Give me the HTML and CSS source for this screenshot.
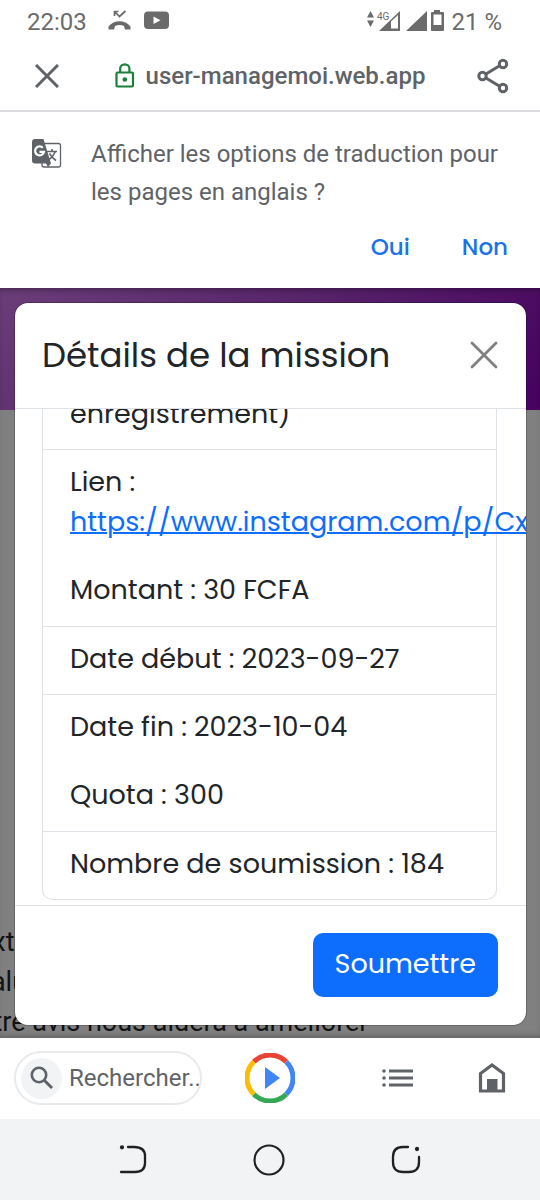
FILE: index.html
```html
<!DOCTYPE html>
<html lang="fr">
<head>
<meta charset="utf-8">
<meta name="viewport" content="width=device-width, initial-scale=1">
<title>Détails de la mission</title>
<link rel="stylesheet" href="styles.css">
</head>
<body>
<div class="status">
  <span class="status-time">22:03</span>
  <svg class="status-left-icons" width="62" height="24" viewBox="0 0 62 24" aria-hidden="true">
    <path d="M0.500 16.500C6 9.500 17 9.500 22.500 16.500V19.500H17L16 16Q11.500 14.200 7 16L6 19.500H0.500Z" fill="#6b6b6b"/>
    <path d="M6.500 6V1.500H10.500M6.500 1.500L11.500 6.500 17.500 1" fill="none" stroke="#6b6b6b" stroke-width="1.700"/>
    <rect x="36" y="1.500" width="25" height="17.500" rx="4" fill="#6b6b6b"/>
    <path d="M45.500 6.500v7.500l7-3.750z" fill="#fff"/>
  </svg>
  <svg class="status-right-icons" width="78" height="24" viewBox="0 0 78 24" aria-hidden="true">
    <g fill="#6b6b6b">
      <path d="M0 7.500L3.500 1 7 7.500zM0 10.500h7L3.500 17z"/>
      <path d="M12 21L33 1V21z"/>
      <path d="M39 21L60 1V21z"/>
      <path d="M64 2h3V0h6v2h3a1 1 0 0 1 1 1v17a1 1 0 0 1-1 1H65a1 1 0 0 1-1-1V3a1 1 0 0 1 1-1z"/>
    </g>
    <path d="M24 18.500V11.500L31 5V18.500z" fill="#fff"/>
    <path d="M66.500 4.500h8V15h-8z" fill="#fff"/>
    <text x="10" y="9.500" class="network-label">4G</text>
  </svg>
  <span class="status-battery">21 %</span>
</div>

<header class="address-bar">
  <button class="icon-button" type="button" aria-label="Fermer l’onglet">
    <svg width="24" height="24" viewBox="0 0 24 24"><path d="M1 1L23 23M23 1L1 23" stroke="#5f6368" stroke-width="3"/></svg>
  </button>
  <div class="address">
    <svg width="20" height="26" viewBox="0 0 20 26" aria-hidden="true">
      <rect x="1.500" y="9.500" width="16.500" height="14" rx="1" fill="none" stroke="#188038" stroke-width="2.200"/>
      <path d="M5.200 9V5.500a4.600 4.200 0 0 1 9.200 0V9" fill="none" stroke="#188038" stroke-width="2.200"/>
      <circle cx="9.800" cy="16.500" r="2.300" fill="#188038"/>
    </svg>
    <span>user-managemoi.web.app</span>
  </div>
  <button class="icon-button" type="button" aria-label="Partager">
    <svg width="32" height="36" viewBox="0 0 32 36" fill="none" stroke="#5f6368" stroke-width="3">
      <path d="M9 16L23 7.500M9 20L23 28.500"/>
      <circle cx="5.500" cy="18" r="3.700"/><circle cx="26" cy="6" r="3.700"/><circle cx="26" cy="30" r="3.700"/>
    </svg>
  </button>
</header>

<section class="translate">
  <div class="translate-row">
    <svg class="translate-icon" width="30" height="30" viewBox="0 0 30 30" aria-hidden="true">
      <rect x="10" y="4.500" width="18.500" height="23.500" rx="2" fill="#fff" stroke="#5f6368" stroke-width="1.300"/>
      <path d="M3 0H11.500L19 24.500 16 28 14 24.500H3a3 3 0 0 1-3-3V3a3 3 0 0 1 3-3z" fill="#5f6368"/>
      <path d="M10.800 8.700A4.500 4.500 0 1 0 12 12.800H7.500" fill="none" stroke="#fff" stroke-width="2.200"/>
      <path d="M15 12.500H25M20 10V12.500M23.500 12.500Q21 18 16.500 21M17.500 14.500Q20 19 24 21.500" fill="none" stroke="#5f6368" stroke-width="1.600"/>
    </svg>
    <p class="translate-text">Afficher les options de traduction pour les pages en anglais ?</p>
  </div>
  <div class="translate-actions">
    <button class="text-button" type="button">Oui</button>
    <button class="text-button" type="button">Non</button>
  </div>
</section>

<main class="viewport">
  <div class="backdrop" aria-hidden="true">
    <div class="hero"></div>
    <div class="page-text"><div>exte</div><div>valu</div><div>otre avis nous aidera à améliorer</div></div>
  </div>
  <div class="modal" role="dialog" aria-labelledby="modal-title">
    <div class="modal-header">
      <h1 class="modal-title" id="modal-title">Détails de la mission</h1>
      <button class="icon-button" type="button" aria-label="Fermer">
        <svg width="28" height="28" viewBox="0 0 28 28"><path d="M2 2L26 26M26 2L2 26" stroke="#808080" stroke-width="2.800" stroke-linecap="round"/></svg>
      </button>
    </div>
    <div class="modal-body">
      <ul class="details">
        <li class="detail">enregistrement)</li>
        <li class="detail joined">Lien :<br><a class="link" href="#">https://www.instagram.com/p/Cx</a></li>
        <li class="detail">Montant : 30 FCFA</li>
        <li class="detail">Date début : 2023-09-27</li>
        <li class="detail joined">Date fin : 2023-10-04</li>
        <li class="detail">Quota : 300</li>
        <li class="detail">Nombre de soumission : 184</li>
      </ul>
    </div>
    <div class="modal-footer">
      <button class="submit" type="button">Soumettre</button>
    </div>
  </div>
</main>

<footer class="toolbar">
  <button class="search" type="button">
    <span class="search-icon">
      <svg width="24" height="24" viewBox="0 0 24 24" aria-hidden="true"><circle cx="9" cy="9" r="7.200" fill="none" stroke="#5f6368" stroke-width="2.600"/><path d="M14 14L22 22" stroke="#5f6368" stroke-width="3"/></svg>
    </span>
    <span class="search-label">Rechercher..</span>
  </button>
  <button class="icon-button play-button" type="button" aria-label="Lecture">
    <svg width="50" height="50" viewBox="0 0 50 50" fill="none" stroke-width="5">
      <path d="M8.800 8.800A22.700 22.700 0 0 1 41.200 8.800" stroke="#ea4335"/>
      <path d="M41.200 8.800A22.700 22.700 0 0 1 41.200 41.200" stroke="#4285f4"/>
      <path d="M41.200 41.200A22.700 22.700 0 0 1 8.800 41.200" stroke="#34a853"/>
      <path d="M8.800 41.200A22.700 22.700 0 0 1 8.800 8.800" stroke="#fbbc04"/>
      <path d="M20 14V36L35 25z" fill="#4285f4"/>
    </svg>
  </button>
  <button class="icon-button list-button" type="button" aria-label="Liste">
    <svg width="32" height="18" viewBox="0 0 32 18" fill="#5f6368">
      <path d="M7 .5H31v3H7zM7 7.500H31v3H7zM7 14.500H31v3H7z"/>
      <circle cx="2" cy="2" r="1.800"/><circle cx="2" cy="9" r="1.800"/><circle cx="2" cy="16" r="1.800"/>
    </svg>
  </button>
  <button class="icon-button" type="button" aria-label="Accueil">
    <svg width="28" height="32" viewBox="0 0 28 32">
      <path d="M2.500 29V11.500L14 3 25.500 11.500V29z" fill="none" stroke="#5f6368" stroke-width="3.200"/>
      <path d="M9 17H19.500V30H9z" fill="#5f6368"/>
    </svg>
  </button>
</footer>

<nav class="system-nav" aria-label="Navigation système">
  <button class="icon-button" type="button" aria-label="Retour">
    <svg width="28" height="30" viewBox="0 0 28 30" fill="none" stroke="#202124" stroke-width="2.300" stroke-linecap="round"><path d="M9 2H15Q26 2 26 11V18Q26 27 16 27H2"/><circle cx="3" cy="2.300" r="1" fill="#202124"/></svg>
  </button>
  <button class="icon-button" type="button" aria-label="Écran d’accueil">
    <svg width="32" height="32" viewBox="0 0 32 32" fill="none" stroke="#202124" stroke-width="2.200"><circle cx="16" cy="16" r="14.500"/></svg>
  </button>
  <button class="icon-button" type="button" aria-label="Applications récentes">
    <svg width="30" height="30" viewBox="0 0 30 30" fill="none" stroke="#202124" stroke-width="2.300" stroke-linecap="round"><path d="M17 2H12Q2 2 2 12V17Q2 27 12 27H18Q28 27 28 17V12"/><circle cx="26" cy="4" r="1" fill="#202124"/></svg>
  </button>
</nav>
</body>
</html>
```

FILE: styles.css
```css
* { box-sizing: border-box; }

body {
  margin: 0;
  min-height: 100vh;
  display: flex;
  flex-direction: column;
  background: #fff;
  color: #5f6368;
  font-family: Roboto, "Liberation Sans", sans-serif;
  overflow-x: hidden;
}

button {
  border: 0;
  padding: 0;
  background: none;
  font: inherit;
  color: inherit;
  cursor: pointer;
}

svg { display: block; flex: none; }

.icon-button { display: flex; flex: none; }

/* Device status bar */
.status {
  display: flex;
  align-items: center;
  height: 44px;
  padding: 0 38px 0 27px;
  color: #6b6b6b;
  font-size: 24px;
}
.status-left-icons { margin-left: 21px; }
.status-right-icons { margin-left: auto; margin-right: 6px; }
.network-label { font-size: 10px; fill: #6b6b6b; }

/* Browser address bar */
.address-bar {
  display: flex;
  align-items: center;
  justify-content: space-between;
  height: 68px;
  padding: 0 31px 2px 35px;
  border-bottom: 2px solid #dadce0;
}
.address {
  display: flex;
  align-items: center;
  gap: 11px;
  padding-left: 4px;
  font-size: 24px;
  font-weight: 500;
}

/* Translation prompt */
.translate { padding: 23px 32px 17px; }
.translate-row { display: flex; gap: 29px; }
.translate-icon { margin-top: 4px; }
.translate-text { margin: 0; font-size: 24px; line-height: 38px; }
.translate-actions {
  display: flex;
  justify-content: flex-end;
  gap: 52px;
  padding-top: 12px;
}
.text-button {
  color: #1a73e8;
  font-family: Poppins, Roboto, sans-serif;
  font-size: 23px;
  font-weight: 500;
  line-height: 48px;
}

/* Web page behind the dialog */
.viewport {
  position: relative;
  flex: 1;
  display: flex;
  flex-direction: column;
  padding: 15px 14px 13px 15px;
  overflow: hidden;
}
.backdrop {
  position: absolute;
  inset: 0;
  display: flex;
  flex-direction: column;
  justify-content: space-between;
  background: #808080;
  box-shadow: inset 0 -4px 6px -3px rgba(0, 0, 0, .3);
}
.hero {
  height: 122px;
  background: linear-gradient(135deg, #6a3d78, #562269 50%, #470060);
  box-shadow: inset 0 4px 6px -3px rgba(0, 0, 0, .4);
}
.page-text {
  margin-bottom: -4px;
  color: #111214;
  font-size: 27px;
  line-height: 40px;
  text-indent: -22px;
  white-space: nowrap;
}

/* Mission dialog */
.modal {
  position: relative;
  flex: 1;
  display: flex;
  flex-direction: column;
  border-radius: 13px;
  background: #fff;
  color: #212529;
  font-family: Poppins, Inter, "Open Sans", sans-serif;
  font-size: 27px;
  line-height: 40px;
  overflow: hidden;
  box-shadow: 0 0 0 1px rgba(0, 0, 0, .2);
}
.modal-header {
  display: flex;
  align-items: center;
  justify-content: space-between;
  height: 106px;
  padding: 0 28px 2px 27px;
  border-bottom: 1px solid #dee2e6;
}
.modal-title { margin: 0; font-size: 34px; font-weight: 400; line-height: 52px; }
.modal-body {
  flex: 1 1 0;
  min-height: 0;
  display: flex;
  flex-direction: column;
  justify-content: flex-end;
  padding: 0 29px 5px 27px;
  overflow: hidden;
}
.details {
  flex: none;
  margin: 0;
  padding: 0;
  border: 1px solid #dee2e6;
  border-bottom: 0;
  border-radius: 10px;
  list-style: none;
}
.detail {
  padding: 12px 28px 15px 27px;
  border-bottom: 1px solid #dee2e6;
  white-space: nowrap;
}
.detail:last-child { border-radius: 0 0 10px 10px; }
.joined { border-bottom-color: transparent; }
.joined + .detail { padding-bottom: 16px; }
.link { color: #0d6efd; text-decoration-thickness: 2px; }
.modal-footer {
  display: flex;
  justify-content: flex-end;
  padding: 27px 28px 28px;
  border-top: 1px solid #dee2e6;
}
.submit {
  height: 64px;
  padding: 0 22px 2px;
  border-radius: 10px;
  background: #0d6efd;
  color: #fff;
}

/* Browser bottom toolbar */
.toolbar {
  display: flex;
  align-items: center;
  height: 81px;
  padding: 0 34px 1px 14px;
}
.search {
  display: flex;
  align-items: center;
  gap: 7px;
  width: 188px;
  height: 54px;
  padding: 0 0 0 5px;
  border: 2px solid #e8eaed;
  border-radius: 27px;
  font-size: 24px;
  overflow: hidden;
}
.search-icon {
  display: flex;
  flex: none;
  align-items: center;
  justify-content: center;
  width: 41px;
  height: 41px;
  border-radius: 50%;
  background: #f1f3f4;
}
.search-label { white-space: nowrap; }
.play-button { margin-left: 43px; }
.list-button { margin: 0 auto; padding-left: 22px; }

/* System navigation */
.system-nav {
  display: flex;
  align-items: center;
  justify-content: center;
  gap: 106px;
  height: 81px;
  background: #f1f3f4;
}
```
